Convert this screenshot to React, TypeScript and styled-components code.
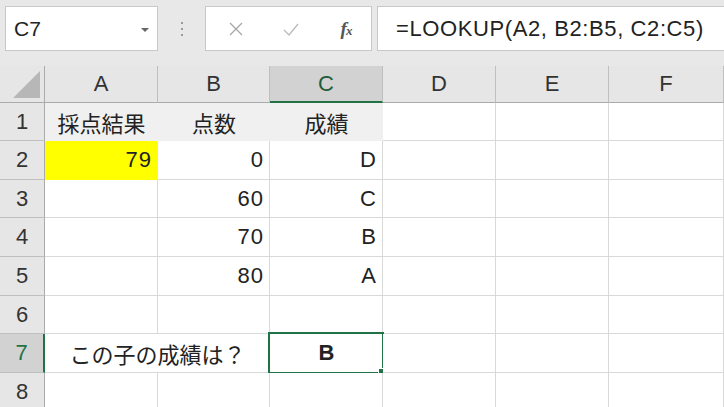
import React from "react";
import styled, { createGlobalStyle } from "styled-components";

const Global = createGlobalStyle`
  html, body { margin: 0; padding: 0; background: #ffffff; overflow: hidden; }
  * { box-sizing: border-box; }
`;

const FONT = `"Liberation Sans", "Noto Sans CJK JP", sans-serif`;
const GREEN = "#217346";
const GRID = "#d9d9d9";
const HEADER_LINE = "#bfbfbf";

const Page = styled.div`
  width: 724px;
  height: 407px;
  overflow: hidden;
  font-family: ${FONT};
  background: #ffffff;
`;

const TopBar = styled.div`
  height: 66px;
  background: #e8e8e8;
  display: flex;
  align-items: flex-start;
  padding: 6px 0 0 5px;
`;

const NameBox = styled.div`
  width: 153px;
  height: 45px;
  background: #fff;
  border: 1px solid #c8c8c8;
  display: flex;
  align-items: center;
  justify-content: space-between;
  padding: 0 8px 0 8px;
  font-size: 21px;
  color: #222;
`;

const DropArrow = styled.span`
  width: 0;
  height: 0;
  border-left: 4px solid transparent;
  border-right: 4px solid transparent;
  border-top: 4px solid #666;
  margin-top: 2px;
`;

const Dots = styled.div`
  width: 47px;
  height: 45px;
  display: flex;
  flex-direction: column;
  align-items: center;
  justify-content: center;
  gap: 4px;
`;

const Dot = styled.span`
  width: 2px;
  height: 2px;
  background: #9a9a9a;
`;

const ButtonBox = styled.div`
  width: 167px;
  height: 45px;
  background: #fff;
  border: 1px solid #c8c8c8;
  display: flex;
  align-items: center;
  padding-left: 20px;
  gap: 35px;
`;

const IconButton = styled.span`
  width: 20px;
  height: 20px;
  display: flex;
  align-items: center;
  justify-content: center;
`;

const Fx = styled.span`
  font-family: "Liberation Serif", "DejaVu Serif", serif;
  font-style: italic;
  font-weight: bold;
  font-size: 19px;
  color: #555;
  letter-spacing: -1px;
  line-height: 1;
  & > small {
    font-size: 13px;
  }
`;

const FormulaInput = styled.div`
  flex: 1;
  margin-left: 5px;
  height: 45px;
  background: #fff;
  border: 1px solid #c8c8c8;
  border-right: none;
  display: flex;
  align-items: center;
  padding-left: 18px;
  font-size: 22px;
  letter-spacing: 0.6px;
  color: #222;
  white-space: nowrap;
`;

const COLS = [45, 113, 112, 113, 113, 113, 115];
const ROWH = [38, 39, 38, 39, 39, 38, 39, 39];

const Grid = styled.div`
  display: grid;
  grid-template-columns: ${COLS.map((c) => c + "px").join(" ")};
  grid-template-rows: 37px ${ROWH.map((r) => r + "px").join(" ")};
`;

const Corner = styled.div`
  background: #e6e6e6;
  border-right: 1px solid #ababab;
  border-bottom: 1px solid #ababab;
  position: relative;
  &::after {
    content: "";
    position: absolute;
    right: 4px;
    bottom: 4px;
    width: 0;
    height: 0;
    border-left: 27px solid transparent;
    border-bottom: 27px solid #b7b7b7;
  }
`;

const ColHead = styled.div<{ $sel?: boolean }>`
  background: ${(p) => (p.$sel ? "#d2d2d2" : "#e6e6e6")};
  border-right: 1px solid ${HEADER_LINE};
  border-bottom: ${(p) => (p.$sel ? `2px solid ${GREEN}` : "1px solid #ababab")};
  display: flex;
  align-items: center;
  justify-content: center;
  font-size: 22px;
  color: ${(p) => (p.$sel ? "#1f5c3a" : "#333")};
  padding-top: ${(p) => (p.$sel ? "1px" : "0")};
`;

const RowHead = styled.div<{ $sel?: boolean }>`
  background: ${(p) => (p.$sel ? "#d2d2d2" : "#e6e6e6")};
  border-right: ${(p) => (p.$sel ? `2px solid ${GREEN}` : "1px solid #ababab")};
  border-bottom: 1px solid ${HEADER_LINE};
  display: flex;
  align-items: center;
  justify-content: center;
  font-size: 22px;
  color: ${(p) => (p.$sel ? GREEN : "#333")};
`;

const Cell = styled.div<{
  $fill?: string;
  $align?: "left" | "right" | "center";
  $bold?: boolean;
  $span?: number;
  $wide?: boolean;
}>`
  grid-column: span ${(p) => p.$span ?? 1};
  background: ${(p) => p.$fill ?? "#fff"};
  border-right: 1px solid ${(p) => p.$fill ?? GRID};
  border-bottom: 1px solid ${(p) => p.$fill ?? GRID};
  display: flex;
  align-items: center;
  justify-content: ${(p) =>
    p.$align === "right" ? "flex-end" : p.$align === "center" ? "center" : "flex-start"};
  padding: 0 ${(p) => (p.$wide ? "5px" : "6px")} 0 7px;
  font-size: 22px;
  letter-spacing: ${(p) => (p.$wide ? "1px" : "0")};
  font-weight: ${(p) => (p.$bold ? "bold" : "normal")};
  color: #222;
  white-space: nowrap;
  position: relative;
`;

const Selected = styled.div`
  position: absolute;
  left: -2px;
  top: -2px;
  right: -2px;
  bottom: -2px;
  border: 2px solid ${GREEN};
  pointer-events: none;
  &::after {
    content: "";
    position: absolute;
    right: -4px;
    bottom: -4px;
    width: 6px;
    height: 6px;
    background: ${GREEN};
    border: 1px solid #fff;
  }
`;

type C = {
  t?: string;
  a?: "left" | "right" | "center";
  fill?: string;
  bold?: boolean;
  span?: number;
  sel?: boolean;
  wide?: boolean;
};

const GREY = "#f0f0f0";
const YELLOW = "#ffff00";

const rows: C[][] = [
  [
    { t: "採点結果", a: "center", fill: GREY },
    { t: "点数", a: "center", fill: GREY },
    { t: "成績", a: "center", fill: GREY },
    {}, {}, {},
  ],
  [
    { t: "79", a: "right", fill: YELLOW, wide: true },
    { t: "0", a: "right", wide: true },
    { t: "D", a: "right" },
    {}, {}, {},
  ],
  [{}, { t: "60", a: "right", wide: true }, { t: "C", a: "right" }, {}, {}, {}],
  [{}, { t: "70", a: "right", wide: true }, { t: "B", a: "right" }, {}, {}, {}],
  [{}, { t: "80", a: "right", wide: true }, { t: "A", a: "right" }, {}, {}, {}],
  [{}, {}, {}, {}, {}, {}],
  [
    { t: "この子の成績は？", a: "center", span: 2 },
    { t: "B", a: "center", bold: true, sel: true },
    {}, {}, {},
  ],
  [{}, {}, {}, {}, {}, {}],
];

export default function App() {
  return (
    <Page>
      <Global />
      <TopBar>
        <NameBox>
          <span>C7</span>
          <DropArrow />
        </NameBox>
        <Dots>
          <Dot />
          <Dot />
          <Dot />
        </Dots>
        <ButtonBox>
          <IconButton>
            <svg width="16" height="16" viewBox="0 0 16 16">
              <path d="M2 2 L14 14 M14 2 L2 14" stroke="#a6a6a6" strokeWidth="1.3" fill="none" />
            </svg>
          </IconButton>
          <IconButton>
            <svg width="18" height="16" viewBox="0 0 18 16">
              <path d="M2 9 L7 14 L16 3" stroke="#bcbcbc" strokeWidth="1.4" fill="none" />
            </svg>
          </IconButton>
          <IconButton>
            <Fx>
              f<small>x</small>
            </Fx>
          </IconButton>
        </ButtonBox>
        <FormulaInput>=LOOKUP(A2, B2:B5, C2:C5)</FormulaInput>
      </TopBar>
      <Grid>
        <Corner />
        {["A", "B", "C", "D", "E", "F"].map((c) => (
          <ColHead key={c} $sel={c === "C"}>
            {c}
          </ColHead>
        ))}
        {rows.map((r, i) => (
          <React.Fragment key={i}>
            <RowHead $sel={i === 6}>{i + 1}</RowHead>
            {r.map((c, j) => (
              <Cell
                key={j}
                $align={c.a}
                $fill={c.fill}
                $bold={c.bold}
                $span={c.span}
                $wide={c.wide}
              >
                {c.t}
                {c.sel && <Selected />}
              </Cell>
            ))}
          </React.Fragment>
        ))}
      </Grid>
    </Page>
  );
}
